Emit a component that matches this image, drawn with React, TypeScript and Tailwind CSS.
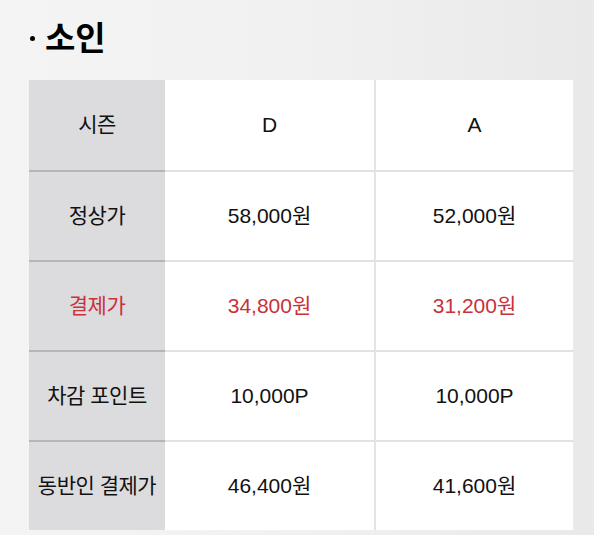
const rows = [
  { label: "시즌", d: "D", a: "A", red: false },
  { label: "정상가", d: "58,000원", a: "52,000원", red: false },
  { label: "결제가", d: "34,800원", a: "31,200원", red: true },
  { label: "차감 포인트", d: "10,000P", a: "10,000P", red: false },
  { label: "동반인 결제가", d: "46,400원", a: "41,600원", red: false },
];

export default function App() {
  return (
    <div
      className="w-[594px] h-[535px] overflow-hidden bg-gradient-to-r from-[#f4f4f4] via-[#f1f1f1] to-[#e9e9e9] pt-[14px] pl-[29px]"
      style={{ fontFamily: '"Liberation Sans", "Noto Sans CJK KR", sans-serif' }}
    >
      <h2 className="flex items-center h-[44px] text-[33px] font-bold text-black leading-none">
        <span className="w-[5px] h-[5px] rounded-full bg-black mr-[10px] ml-[1px] mt-[4px]" />
        <span style={{ fontFamily: '"Noto Sans CJK KR", sans-serif' }}>소인</span>
      </h2>
      <div className="mt-[22px] w-[544px] flex flex-col">
        {rows.map((row, i) => (
          <div key={row.label} className="flex h-[90px]">
            <div
              className={`w-[136px] flex items-center justify-center bg-[#dcdcde] text-[21px] tracking-[-0.5px] ${
                i > 0 ? "border-t-2 border-[#b6b6b8]" : ""
              } ${row.red ? "text-[#c8323b]" : "text-[#111]"}`}
            >
              {row.label}
            </div>
            <div
              className={`w-[211px] flex items-center justify-center bg-white text-[21px] border-r-2 border-[#e4e4e4] ${
                i > 0 ? "border-t-2 border-t-[#e2e2e2]" : ""
              } ${row.red ? "text-[#c8323b]" : "text-[#111]"}`}
            >
              {row.d}
            </div>
            <div
              className={`flex-1 flex items-center justify-center bg-white text-[21px] ${
                i > 0 ? "border-t-2 border-[#e2e2e2]" : ""
              } ${row.red ? "text-[#c8323b]" : "text-[#111]"}`}
            >
              {row.a}
            </div>
          </div>
        ))}
      </div>
    </div>
  );
}
